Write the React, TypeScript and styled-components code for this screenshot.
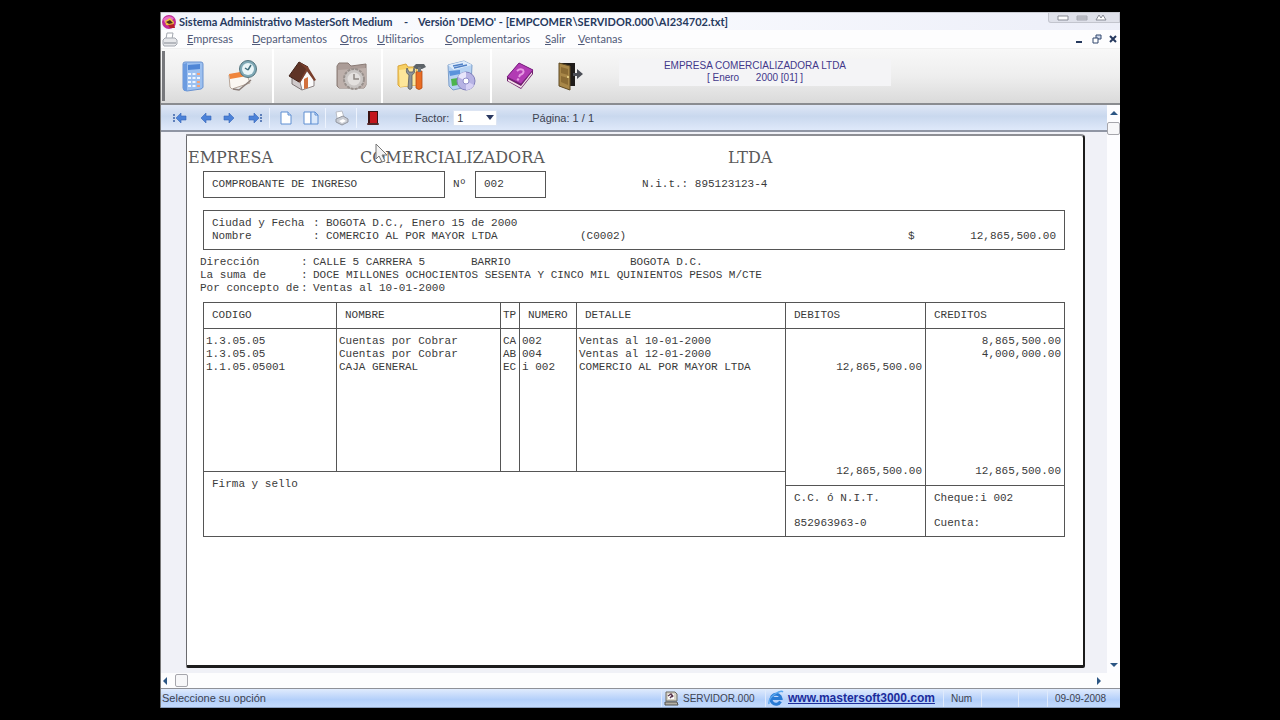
import React from 'react';
import styled, { createGlobalStyle } from 'styled-components';

const UI = "'Liberation Sans', Arial, sans-serif";
const MENU = "Lato, 'Liberation Sans', sans-serif";
const MONO = "'Liberation Mono', 'Courier New', monospace";

const Global = createGlobalStyle`
  *, *::before, *::after { box-sizing: border-box; }
  html, body { margin: 0; background: #000; }
  button { border: 0; padding: 0; margin: 0; background: none; color: inherit; font: inherit; }
`;

const Screen = styled.div`
  min-height: 100vh;
  padding: 12px 0;
  display: flex;
  justify-content: center;
  background: #000;
  font-family: ${UI};
  font-size: 11px;
  color: #3c4250;
`;

const Window = styled.div`
  position: relative;
  width: 75%;
  min-width: 940px;
  display: flex;
  flex-direction: column;
  background: #fff;
  border-left: 1px solid #777;
`;

const TitleBar = styled.header`
  height: 18px;
  display: flex;
  align-items: center;
  background: linear-gradient(90deg, #f2f5fb, #fbfcff 40%, #eceef8);
  border-top: 1px solid #c9cbd2;
`;

const Title = styled.h1`
  flex: 1;
  margin: 0;
  padding-left: 2px;
  display: flex;
  font: bold 11px/16px ${MENU};
  color: #26395e;
  white-space: pre;
`;

const TitlePart = styled.span<{ $width?: number }>`
  width: ${(p) => (p.$width ? `${p.$width}px` : 'auto')};
`;

const CaptionButtons = styled.div`
  align-self: flex-start;
  width: 72px;
  height: 10px;
  display: flex;
  justify-content: space-around;
  align-items: center;
  padding: 0 8px 0 4px;
  background: #dfe1ea;
  border: 1px solid #c3c5ce;
  border-top: 0;
  border-radius: 0 0 0 3px;
`;

const IconButton = styled.button<{ $width?: number }>`
  display: flex;
  align-items: center;
  justify-content: center;
  width: ${(p) => p.$width ?? 18}px;
`;

const MenuBar = styled.nav`
  height: 18px;
  display: flex;
  align-items: center;
  padding-left: 1px;
  background: #fdfdfe;
`;

const MenuItems = styled.div`
  flex: 1;
  padding-left: 9px;
  display: grid;
  grid-template-columns: 65px 88px 37px 68px 100px 33px auto;
  justify-content: start;
  font: 11px/18px ${MENU};
  color: #505a78;
`;

const MenuButton = styled.button`
  text-align: left;
`;

const MenuLetter = styled.span`
  text-decoration: underline;
`;

const ToolBar = styled.div`
  height: 57px;
  display: flex;
  align-items: stretch;
  padding-left: 1px;
  background: linear-gradient(#f8f8f8, #eeeeee 50%, #dadada);
  border-top: 1px solid #f0f0f0;
  border-bottom: 2px solid #8a8c90;
`;

const Grip = styled.div`
  width: 3px;
  margin: 2px 0;
  background: #77787c;
`;

const ToolGroup = styled.div<{ $last?: boolean }>`
  display: flex;
  padding: 0 4px 0 3px;
  border-right: ${(p) => (p.$last ? 0 : 2)}px solid #fff;
`;

const CompanyPanel = styled.div`
  align-self: flex-start;
  width: 272px;
  margin: 10px 0 0 20px;
  padding: 1px 0 2px;
  background: #f4f4f6;
  font-size: 10px;
  line-height: 12px;
  color: #43388a;
  text-align: center;
  white-space: pre;
`;

const Workspace = styled.div`
  flex: 1;
  display: flex;
`;

const Preview = styled.section`
  flex: 1;
  display: flex;
  flex-direction: column;
`;

const PreviewBar = styled.div`
  height: 27px;
  display: flex;
  align-items: center;
  padding-left: 6px;
  background: linear-gradient(#dfe7f6, #c9d8ee 45%, #dfe9fa);
  border-bottom: 2px solid #9096a4;
`;

const Divider = styled.div`
  width: 1px;
  height: 20px;
  margin: 0 3px 0 2px;
  background: #edf3fd;
`;

const FactorLabel = styled.label`
  margin-left: 30px;
  display: flex;
  align-items: center;
  gap: 4px;
`;

const FactorBox = styled.span`
  position: relative;
  display: flex;
  align-items: center;
`;

const FactorSelect = styled.select`
  appearance: none;
  width: 44px;
  height: 16px;
  padding: 0 3px;
  border: 1px solid #dde5f3;
  border-radius: 0;
  background: #fff;
  font: 11px/14px ${UI};
  color: #3c4250;
`;

const SelectArrow = styled.svg`
  position: absolute;
  right: 3px;
  pointer-events: none;
`;

const PageCount = styled.span`
  margin-left: 35px;
`;

const Canvas = styled.main`
  flex: 1;
  display: flex;
  padding: 2px 22px 5px 25px;
  background: #f0f1f7;
`;

const Paper = styled.article`
  flex: 1;
  padding: 12px 18px 0 16px;
  background: #fff;
  border: 1px solid #6a6a6e;
  border-top: 2px solid #8e8f94;
  border-right: 2px solid #1c1c1c;
  border-bottom: 3px solid #1c1c1c;
  border-radius: 0 4px 2px 2px;
  font: 11px/13px ${MONO};
  color: #3a3a3a;
`;

const CompanyName = styled.h2`
  margin: 0 0 0 -15px;
  display: grid;
  grid-template-columns: 172px 368px auto;
  font: 16px/20px 'DejaVu Serif', serif;
  color: #5a5a5a;
`;

const VoucherHead = styled.div`
  margin-top: 3px;
  display: flex;
  align-items: center;
`;

const Box = styled.div<{ $width: number }>`
  width: ${(p) => p.$width}px;
  padding: 6px 8px;
  border: 1px solid #555;
`;

const NumberLabel = styled.span`
  width: 30px;
  padding-left: 8px;
`;

const TaxId = styled.span`
  padding-left: 96px;
`;

const InfoBox = styled.div`
  margin-top: 12px;
  padding: 6px 8px;
  border: 1px solid #555;
`;

const InfoRow = styled.div`
  display: grid;
  grid-template-columns: 101px 13px 254px 328px auto 1fr;
  white-space: pre;
`;

const InfoAmount = styled.span`
  text-align: right;
`;

const Lines = styled.div`
  margin: 6px 0 7px -3px;
`;

const LineRow = styled.div`
  display: grid;
  grid-template-columns: 101px 12px 158px 159px 1fr;
  white-space: nowrap;
`;

const LineText = styled.span<{ $wide?: boolean }>`
  grid-column: ${(p) => (p.$wide ? '3 / -1' : 'auto')};
`;

const Entries = styled.table`
  width: 100%;
  table-layout: fixed;
  border-collapse: collapse;
  border: 1px solid #555;
`;

const Col = styled.col<{ $width?: number }>`
  width: ${(p) => (p.$width ? `${p.$width}px` : 'auto')};
`;

const Row = styled.tr<{ $height: number }>`
  height: ${(p) => p.$height}px;
`;

const Head = styled.th<{ $tight?: boolean }>`
  padding: 0 0 0 ${(p) => (p.$tight ? 2 : 8)}px;
  border: 1px solid #555;
  font-weight: normal;
  text-align: left;
`;

const Cell = styled.td<{ $right?: boolean }>`
  padding: 0 3px 0 2px;
  border-left: 1px solid #555;
  text-align: ${(p) => (p.$right ? 'right' : 'left')};
  vertical-align: bottom;
  white-space: nowrap;
`;

const TotalCell = styled(Cell)`
  padding-bottom: 7px;
  border-bottom: 1px solid #555;
`;

const FootCell = styled.td`
  padding: 6px 8px;
  border: 1px solid #555;
  vertical-align: top;
`;

const FootLine = styled.div`
  height: 25px;
`;

const VScroll = styled.div`
  width: 13px;
  display: flex;
  flex-direction: column;
  align-items: center;
  padding: 4px 0;
  background: #fdfdff;
`;

const HScroll = styled.div`
  height: 16px;
  display: flex;
  align-items: center;
  padding: 0 17px 0 1px;
  background: #fdfdfe;
  border-bottom: 1px solid #8f9198;
`;

const Thumb = styled.div`
  width: 13px;
  height: 13px;
  background: #f7f7f9;
  border: 1px solid #a6a6ac;
  border-radius: 2px;
`;

const VThumb = styled(Thumb)`
  margin-top: 5px;
`;

const HThumb = styled(Thumb)`
  margin-left: 5px;
`;

const Spacer = styled.div`
  flex: 1;
`;

const StatusBar = styled.footer`
  height: 19px;
  display: flex;
  align-items: stretch;
  background: linear-gradient(#e0ebfd, #b3cffa 60%, #c3dafc);
  border-bottom: 1px solid #8ba0c0;
`;

const StatusText = styled.span`
  flex: 1;
  padding-left: 1px;
  line-height: 18px;
`;

const StatusCell = styled.span<{ $width: number; $icon?: boolean }>`
  width: ${(p) => p.$width}px;
  display: flex;
  align-items: center;
  gap: 4px;
  padding-left: ${(p) => (p.$icon ? 2 : 7)}px;
  border-left: 1px solid #dfeafc;
  font-size: 10px;
`;

const SiteLink = styled.a`
  font: bold 12px/16px ${UI};
  color: #1c2c9c;
`;

const Pointer = styled.svg`
  position: absolute;
  left: 214px;
  top: 131px;
  pointer-events: none;
`;

const AppLogo = () => (
  <svg width="16" height="16" viewBox="0 0 16 16">
    <circle cx="8" cy="8" r="7" fill="#c02a98" />
    <path d="M2 5Q7 0 13 4L10 8L4 9Z" fill="#e46fc4" />
    <path d="M4 7L9 4L13 8L12 12L5 11Z" fill="#f0c53a" />
    <path d="M5 8L9 6L12 9L8 10Z" fill="#4e2a20" />
    <path d="M7 11L13 10L14 14L9 14Z" fill="#b51d2c" />
  </svg>
);

const PrinterSmall = () => (
  <svg width="16" height="15" viewBox="0 0 16 15">
    <path d="M4 7L5 1H11L10 7" fill="#fff" stroke="#a3a7af" />
    <path d="M1 8L3 6H13L15 8V12L13 14H2L1 12Z" fill="#e6e7ea" stroke="#a3a7af" />
    <path d="M2 11H14" stroke="#b5b8be" strokeWidth="2" />
  </svg>
);

const Calculator = () => (
  <svg width="34" height="34" viewBox="0 0 34 34">
    <path d="M7 5Q7 3 9 3H25Q27 3 27 5V28Q27 29 25 30L11 32Q7 32 7 29Z" fill="#9cc0f0" stroke="#6b93d0" />
    <path d="M7 5L11 4L11 32Q7 32 7 29Z" fill="#6b9be0" />
    <path d="M12 6L24 5V10L12 11Z" fill="#4f86d6" />
    <g fill="#eef5ff">
      <path d="M12 14h3v2h-3zM16.500 14h3v2h-3zM12 18h3v2h-3zM16.500 18h3v2h-3zM21 18h3v2h-3zM12 22h3v2h-3zM16.500 22h3v2h-3zM12 26h3v2h-3zM16.500 26h3v2h-3z" />
    </g>
    <path d="M21 14h3v2h-3zM21 22h3v2h-3zM21 26h3v2h-3z" fill="#f2a27a" />
  </svg>
);

const ClockNote = () => (
  <svg width="34" height="34" viewBox="0 0 34 34">
    <path d="M3 16L20 13L24 24L12 28L6 30L4 28Z" fill="#fbf7f2" stroke="#b7a79b" />
    <path d="M3 15L20 12L21 17L4 20Z" fill="#f0853c" />
    <path d="M7 30L13 31L25 21" fill="none" stroke="#8a7d78" strokeWidth="1.500" />
    <circle cx="22" cy="10" r="8.500" fill="#7fa9b6" stroke="#54757f" />
    <circle cx="22" cy="10" r="6" fill="#e9f5f8" />
    <path d="M22 11L25 6M22 11L19 9" stroke="#3f6e7c" strokeWidth="1.500" fill="none" />
  </svg>
);

const House = () => (
  <svg width="34" height="34" viewBox="0 0 34 34">
    <path d="M7 16L17 22V31L7 25Z" fill="#cfc9ca" stroke="#7d7475" />
    <path d="M15 23L22 12L29 20V27L17 31Z" fill="#fbfafa" stroke="#8b8384" />
    <path d="M4 17L14 3L23 8L14 23Z" fill="#5f3426" stroke="#3f2118" />
    <path d="M14 3L23 8L31 21L29 22L22 12L15 24L14 23L21 10Z" fill="#7a3f2c" />
    <path d="M19 20L23 18V29L19 30Z" fill="#d2703c" />
  </svg>
);

const ClockFolder = () => (
  <svg width="34" height="34" viewBox="0 0 34 34">
    <path d="M2 7L4 4H13L16 7L31 5V26L29 29H4L2 27Z" fill="#ab9c97" stroke="#897a75" />
    <path d="M3 11L31 9V26L29 29H4L3 27Z" fill="#bdb0ab" />
    <circle cx="19" cy="20" r="10" fill="#c9c5c3" stroke="#98908c" strokeWidth="2" strokeDasharray="3 1" />
    <circle cx="19" cy="20" r="6.500" fill="#e3e0de" />
    <path d="M19 15V20H24" stroke="#8d8581" strokeWidth="1.500" fill="none" />
  </svg>
);

const ToolsFolder = () => (
  <svg width="34" height="34" viewBox="0 0 34 34">
    <path d="M4 7L12 5L14 8H23V26L6 28L4 26Z" fill="#f6cf62" stroke="#d9a53a" />
    <path d="M5 11L22 9V26L6 28Z" fill="#fde69a" />
    <path d="M13 9Q11 14 15 16L14 29Q16 32 18 29L18 16Q22 14 20 9L19 13H15Z" fill="#8b9299" stroke="#555b62" strokeWidth=".8" />
    <path d="M19 8L22 5L30 5L32 8L28 10H22Z" fill="#5d6368" />
    <path d="M22 13L28 12L28 29Q25 32 22 29Z" fill="#ea6c24" stroke="#b24c14" strokeWidth=".8" />
    <path d="M24 8H27V13H24Z" fill="#6f757a" />
  </svg>
);

const DiscBox = () => (
  <svg width="34" height="34" viewBox="0 0 34 34">
    <path d="M4 6L20 2L28 6L27 27L9 31L5 27Z" fill="#b7d3f3" stroke="#7d9fca" />
    <path d="M4 6L20 2L28 6L10 11Z" fill="#e0edfb" />
    <path d="M9 7L19 5M10 9L23 6" stroke="#4f80c6" strokeWidth="1.500" />
    <path d="M5 12L16 11V15L6 17Z" fill="#5a93dc" />
    <path d="M7 20L14 19V26L8 27Z" fill="#4cb44c" />
    <circle cx="22" cy="22" r="9" fill="#b7b3e4" stroke="#8280bc" />
    <path d="M22 22L14 18A9 9 0 0 1 22 13Z" fill="#e8e6fb" />
    <path d="M22 22L30 26A9 9 0 0 1 22 31Z" fill="#d6d0f5" />
    <circle cx="22" cy="22" r="3" fill="#fff" stroke="#8f8cc8" />
  </svg>
);

const HelpBook = () => (
  <svg width="34" height="34" viewBox="0 0 34 34">
    <path d="M4 18L16 4L30 11V15L18 30L4 22Z" fill="#6f1f6b" />
    <path d="M5 20L18 27L29 13L29 15L18 29L5 22Z" fill="#f4e3ea" />
    <path d="M4 18L16 4L30 11L18 25Z" fill="#b23bb4" stroke="#7a2280" />
    <path d="M14 12Q17 9 20 11Q22 14 17 16L16 18" stroke="#e79be4" strokeWidth="2" fill="none" />
    <circle cx="15" cy="20.500" r="1.200" fill="#e79be4" />
  </svg>
);

const ExitDoor = () => (
  <svg width="34" height="34" viewBox="0 0 34 34">
    <path d="M6 4H22V27H16L6 25Z" fill="#1f1c1a" />
    <path d="M6 4L17 7V31L6 27Z" fill="#a88748" stroke="#5f4a24" />
    <path d="M8 8L15 10V16L8 14ZM8 17L15 19V26L8 23Z" fill="#8a6b34" />
    <circle cx="15" cy="18" r="1" fill="#f3dc8e" />
    <path d="M20 14H24V10L30 15L24 20V17H20Z" fill="#4c4f57" />
  </svg>
);

const ArrowIcon = ({ flip, bar }: { flip?: boolean; bar?: boolean }) => (
  <svg width="16" height="12" viewBox="0 0 16 12">
    <g transform={flip ? 'translate(16 0) scale(-1 1)' : undefined}>
      <path d="M2 4H7V1L12 6L7 11V8H2Z" fill="#4c82d8" stroke="#3566b8" strokeWidth=".6" />
      {bar && <path d="M14 2V4M14 5V7M14 8V10" stroke="#3a62a8" strokeWidth="1.500" />}
    </g>
  </svg>
);

const PageIcon = ({ two }: { two?: boolean }) => (
  <svg width="16" height="16" viewBox="0 0 16 16">
    {two ? (
      <>
        <path d="M1 2H8V14H1Z" fill="#fff" stroke="#5f8fd2" />
        <path d="M8 2H12L15 5V14H8Z" fill="#dbe9fb" stroke="#5f8fd2" />
        <path d="M12 2V5H15" fill="none" stroke="#5f8fd2" />
      </>
    ) : (
      <>
        <path d="M3 2H10L13 5V14H3Z" fill="#fff" stroke="#5f8fd2" />
        <path d="M10 2V5H13" fill="#cfe0f8" stroke="#5f8fd2" />
      </>
    )}
  </svg>
);

const PrintIcon = () => (
  <svg width="16" height="16" viewBox="0 0 16 16">
    <path d="M3 8L2 2L8 1L10 7" fill="#fff" stroke="#b9bdc6" />
    <path d="M2 9L9 6L14 9V12L8 15L2 12Z" fill="#c9ccd3" stroke="#92969f" />
    <path d="M5 11L9 9L12 11L8 13Z" fill="#fff" />
  </svg>
);

const CloseDoor = () => (
  <svg width="16" height="16" viewBox="0 0 16 16">
    <path d="M3 1H13V15H3Z" fill="#3b1111" />
    <path d="M5 2H12V13H5Z" fill="#c4161c" />
    <path d="M2 14H14" stroke="#5d3030" strokeWidth="1.500" />
  </svg>
);

const Triangle = ({ d }: { d: string }) => (
  <svg width="8" height="8" viewBox="0 0 8 8">
    <path d={d} fill="#2c5684" />
  </svg>
);

const ServerIcon = () => (
  <svg width="15" height="15" viewBox="0 0 15 15">
    <path d="M2 1H11L13 3V10H2Z" fill="#d9d5c8" stroke="#6d6a62" />
    <path d="M4 3H10V8H4Z" fill="#fff" />
    <path d="M4 5L7 3L9 6M6 7L9 4" stroke="#5b3950" strokeWidth="1.500" fill="none" />
    <path d="M1 11H13L14 14H1Z" fill="#b3afa5" stroke="#55534d" />
  </svg>
);

const BrowserIcon = () => (
  <svg width="16" height="16" viewBox="0 0 16 16">
    <path d="M12.500 11.500A5 5 0 1 1 13 8.500H4" fill="none" stroke="#2a7bd4" strokeWidth="3" />
    <path d="M1 14Q0 9 7 4Q13 0 15 2" fill="none" stroke="#5aa7ee" strokeWidth="1.500" />
  </svg>
);

const menus = ['Empresas', 'Departamentos', 'Otros', 'Utilitarios', 'Complementarios', 'Salir', 'Ventanas'];

const toolGroups = [
  [['Calculadora', Calculator], ['Agenda', ClockNote]],
  [['Inicio', House], ['Historial', ClockFolder]],
  [['Herramientas', ToolsFolder], ['Copias', DiscBox]],
  [['Ayuda', HelpBook], ['Salir', ExitDoor]],
] as [string, React.FC][][];

const entries = [
  ['1.3.05.05', 'Cuentas por Cobrar', 'CA', '002', 'Ventas al 10-01-2000', '', '8,865,500.00'],
  ['1.3.05.05', 'Cuentas por Cobrar', 'AB', '004', 'Ventas al 12-01-2000', '', '4,000,000.00'],
  ['1.1.05.05001', 'CAJA GENERAL', 'EC', 'i 002', 'COMERCIO AL POR MAYOR LTDA', '12,865,500.00', ''],
];

const Voucher = () => (
  <Paper>
    <CompanyName>
      <span>EMPRESA </span>
      <span>COMERCIALIZADORA </span>
      <span>LTDA</span>
    </CompanyName>
    <VoucherHead>
      <Box $width={242}>COMPROBANTE DE INGRESO</Box>
      <NumberLabel>Nº</NumberLabel>
      <Box $width={71}>002</Box>
      <TaxId>N.i.t.: 895123123-4</TaxId>
    </VoucherHead>
    <InfoBox>
      <InfoRow>
        <span>Ciudad y Fecha</span>
        <span>:</span>
        <span>BOGOTA D.C., Enero 15 de 2000</span>
      </InfoRow>
      <InfoRow>
        <span>Nombre</span>
        <span>:</span>
        <span>COMERCIO AL POR MAYOR LTDA</span>
        <span>(C0002)</span>
        <span>$</span>
        <InfoAmount>12,865,500.00</InfoAmount>
      </InfoRow>
    </InfoBox>
    <Lines>
      <LineRow>
        <span>Dirección</span>
        <span>:</span>
        <LineText>CALLE 5 CARRERA 5</LineText>
        <LineText>BARRIO</LineText>
        <LineText>BOGOTA D.C.</LineText>
      </LineRow>
      <LineRow>
        <span>La suma de</span>
        <span>:</span>
        <LineText $wide>DOCE MILLONES OCHOCIENTOS SESENTA Y CINCO MIL QUINIENTOS PESOS M/CTE</LineText>
      </LineRow>
      <LineRow>
        <span>Por concepto de</span>
        <span>:</span>
        <LineText $wide>Ventas al 10-01-2000</LineText>
      </LineRow>
    </Lines>
    <Entries>
      <colgroup>
        <Col $width={133} />
        <Col $width={164} />
        <Col $width={19} />
        <Col $width={57} />
        <Col />
        <Col $width={140} />
        <Col $width={139} />
      </colgroup>
      <thead>
        <Row $height={26}>
          <Head>CODIGO</Head>
          <Head>NOMBRE</Head>
          <Head $tight>TP</Head>
          <Head>NUMERO</Head>
          <Head>DETALLE</Head>
          <Head>DEBITOS</Head>
          <Head>CREDITOS</Head>
        </Row>
      </thead>
      <tbody>
        {entries.map((entry, i) => (
          <Row key={i} $height={i === 0 ? 19 : 13}>
            {entry.map((value, c) => (
              <Cell key={c} $right={c > 4}>{value}</Cell>
            ))}
          </Row>
        ))}
        <Row $height={98}>
          <Cell />
          <Cell />
          <Cell />
          <Cell />
          <Cell />
          <TotalCell $right rowSpan={2}>12,865,500.00</TotalCell>
          <TotalCell $right rowSpan={2}>12,865,500.00</TotalCell>
        </Row>
        <Row $height={14}>
          <FootCell colSpan={5} rowSpan={2}>Firma y sello</FootCell>
        </Row>
        <Row $height={51}>
          <FootCell>
            <FootLine>C.C. ó N.I.T.</FootLine>
            <div>852963963-0</div>
          </FootCell>
          <FootCell>
            <FootLine>Cheque:i 002</FootLine>
            <div>Cuenta:</div>
          </FootCell>
        </Row>
      </tbody>
    </Entries>
  </Paper>
);

export default function App() {
  return (
    <Screen>
      <Global />
      <Window>
        <TitleBar>
          <AppLogo />
          <Title>
            <TitlePart $width={225}>Sistema Administrativo MasterSoft Medium</TitlePart>
            <TitlePart $width={14}>-</TitlePart>
            <TitlePart>Versión 'DEMO' - [EMPCOMER\SERVIDOR.000\AI234702.txt]</TitlePart>
          </Title>
          <CaptionButtons>
            <IconButton aria-label="Minimizar">
              <svg width="12" height="6"><path d="M1 1H11V5H1Z" fill="#fff" stroke="#888b95" /></svg>
            </IconButton>
            <IconButton aria-label="Maximizar">
              <svg width="12" height="6"><path d="M1 1H11V5H1ZM1 3H11" fill="#c9cbd3" stroke="#a5a8b1" /></svg>
            </IconButton>
            <IconButton aria-label="Cerrar">
              <svg width="12" height="7"><path d="M1 6L4 1L6 4L8 1L11 6Z" fill="#fff" stroke="#888b95" /></svg>
            </IconButton>
          </CaptionButtons>
        </TitleBar>
        <MenuBar>
          <PrinterSmall />
          <MenuItems>
            {menus.map((m) => (
              <MenuButton key={m}>
                <MenuLetter>{m[0]}</MenuLetter>
                {m.slice(1)}
              </MenuButton>
            ))}
          </MenuItems>
          <IconButton aria-label="Minimizar documento">
            <svg width="10" height="10"><path d="M2 8H8" stroke="#26395e" strokeWidth="2" /></svg>
          </IconButton>
          <IconButton aria-label="Restaurar documento">
            <svg width="10" height="10">
              <path d="M4 1H9V5H4Z" fill="#cfd9ec" stroke="#33496f" />
              <path d="M1 4H6V9H1Z" fill="#fff" stroke="#33496f" />
            </svg>
          </IconButton>
          <IconButton $width={14} aria-label="Cerrar documento">
            <svg width="10" height="10"><path d="M2 2L8 8M8 2L2 8" stroke="#26395e" strokeWidth="2" /></svg>
          </IconButton>
        </MenuBar>
        <ToolBar>
          <Grip />
          {toolGroups.map((group, i) => (
            <ToolGroup key={i} $last={i === 3}>
              {group.map(([label, Icon]) => (
                <IconButton key={label} $width={50} aria-label={label}>
                  <Icon />
                </IconButton>
              ))}
            </ToolGroup>
          ))}
          <CompanyPanel>
            <div>EMPRESA COMERCIALIZADORA LTDA</div>
            <div>{'[ Enero      2000 [01] ]'}</div>
          </CompanyPanel>
        </ToolBar>
        <Workspace>
          <Preview>
            <PreviewBar>
              <IconButton $width={25} aria-label="Primera página"><ArrowIcon flip bar /></IconButton>
              <IconButton $width={25} aria-label="Página anterior"><ArrowIcon flip /></IconButton>
              <IconButton $width={25} aria-label="Página siguiente"><ArrowIcon /></IconButton>
              <IconButton $width={25} aria-label="Última página"><ArrowIcon bar /></IconButton>
              <Divider />
              <IconButton $width={25} aria-label="Una página"><PageIcon /></IconButton>
              <IconButton $width={25} aria-label="Dos páginas"><PageIcon two /></IconButton>
              <Divider />
              <IconButton $width={25} aria-label="Imprimir"><PrintIcon /></IconButton>
              <Divider />
              <IconButton $width={25} aria-label="Cerrar vista"><CloseDoor /></IconButton>
              <FactorLabel>
                Factor:
                <FactorBox>
                  <FactorSelect defaultValue="1">
                    <option>1</option>
                    <option>2</option>
                  </FactorSelect>
                  <SelectArrow width="8" height="5"><path d="M0 0H8L4 5Z" fill="#2a3860" /></SelectArrow>
                </FactorBox>
              </FactorLabel>
              <PageCount>Página: 1 / 1</PageCount>
            </PreviewBar>
            <Canvas>
              <Voucher />
            </Canvas>
          </Preview>
          <VScroll>
            <Triangle d="M0 6L4 2L8 6Z" />
            <VThumb />
            <Spacer />
            <Triangle d="M0 2L4 6L8 2Z" />
          </VScroll>
        </Workspace>
        <HScroll>
          <Triangle d="M5 0L1 4L5 8Z" />
          <HThumb />
          <Spacer />
          <Triangle d="M2 0L6 4L2 8Z" />
        </HScroll>
        <StatusBar>
          <StatusText>Seleccione su opción</StatusText>
          <StatusCell $width={104} $icon><ServerIcon />SERVIDOR.000</StatusCell>
          <StatusCell $width={178} $icon>
            <BrowserIcon />
            <SiteLink href="#sitio">www.mastersoft3000.com</SiteLink>
          </StatusCell>
          <StatusCell $width={38}>Num</StatusCell>
          <StatusCell $width={37} />
          <StatusCell $width={29} />
          <StatusCell $width={73}>09-09-2008</StatusCell>
        </StatusBar>
        <Pointer width="13" height="20" viewBox="0 0 13 20">
          <path d="M1 1V16L4 13L7 19L10 18L7 12H12Z" fill="#f4f4f4" stroke="#777" />
        </Pointer>
      </Window>
    </Screen>
  );
}
